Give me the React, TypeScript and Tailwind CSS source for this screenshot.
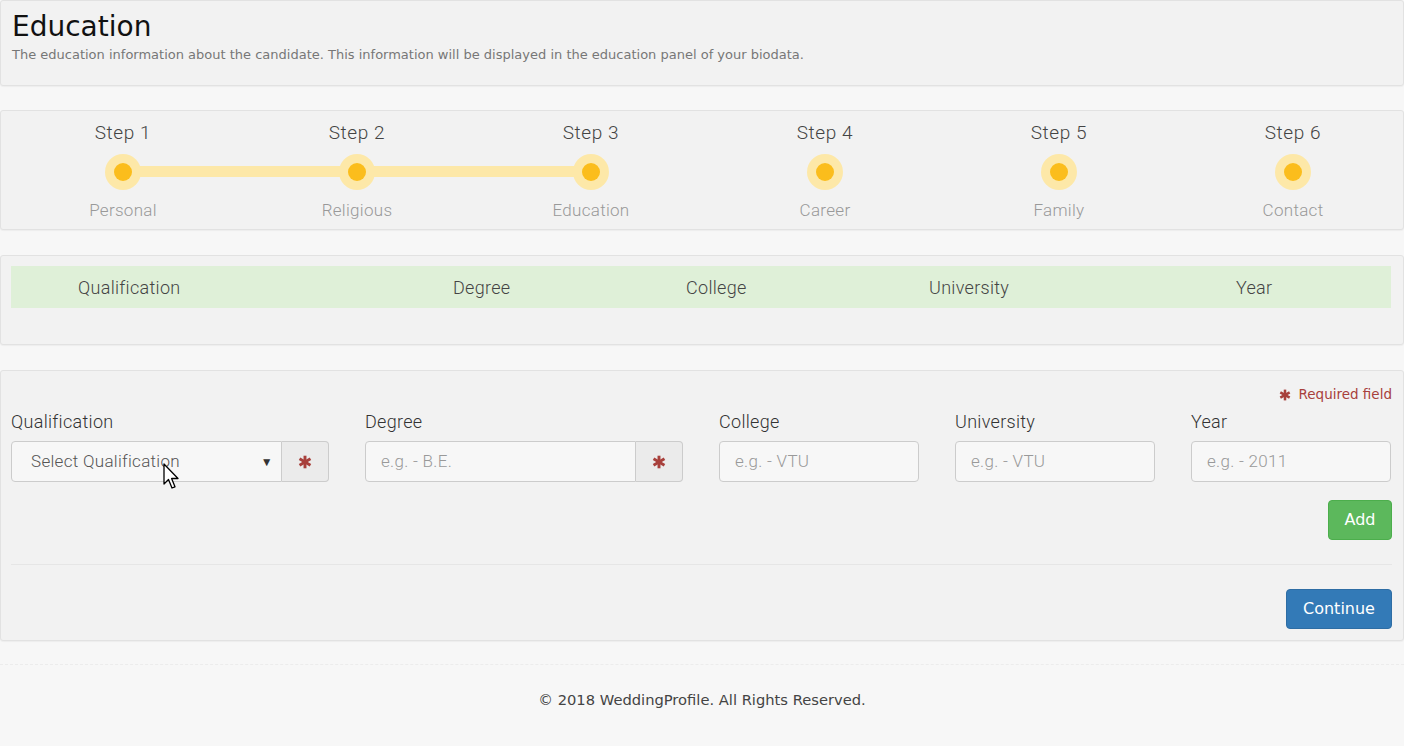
import React from "react";

const work = { fontFamily: '"DejaVu Sans", "Open Sans", sans-serif' };
const cond = { fontFamily: 'Roboto, "Noto Sans", sans-serif', fontWeight: 300 };

function Star({ size = 14 }: { size?: number }) {
  return (
    <svg width={size} height={size} viewBox="0 0 20 20" className="inline-block">
      <g stroke="#a8403c" strokeWidth="4.2" strokeLinecap="butt">
        <line x1="10" y1="1" x2="10" y2="19" />
        <line x1="2.2" y1="5.5" x2="17.8" y2="14.5" />
        <line x1="2.2" y1="14.5" x2="17.8" y2="5.5" />
      </g>
    </svg>
  );
}

const steps = [
  ["Step 1", "Personal"],
  ["Step 2", "Religious"],
  ["Step 3", "Education"],
  ["Step 4", "Career"],
  ["Step 5", "Family"],
  ["Step 6", "Contact"],
];

function Cursor() {
  return (
    <svg width="20" height="28" viewBox="0 0 20 28" className="absolute left-[163px] top-[463px] pointer-events-none">
      <path d="M1 1 L1 21 L5.5 16.5 L9 25 L12 23.8 L8.6 15.5 L15 15.5 Z" fill="#fff" stroke="#000" strokeWidth="1.3" strokeLinejoin="round" />
    </svg>
  );
}

export default function App() {
  return (
    <div className="relative w-[1404px] min-h-[746px] bg-[#f7f7f7] text-[#333]" style={cond}>
      {/* Header panel */}
      <div className="h-[86px] border border-[#e2e2e2] rounded-[3px] bg-[#f2f2f2] px-[11px] pt-[8px] shadow-[0_1px_1px_rgba(0,0,0,0.04)]" style={{ fontWeight: 400 }}>
        <h1 className="text-[28px] leading-[36px] text-[#111]" style={work}>Education</h1>
        <p className="text-[13px] leading-[18px] text-[#777] mt-[1px]" style={work}>
          The education information about the candidate. This information will be displayed in the education panel of your biodata.
        </p>
      </div>

      {/* Steps panel */}
      <div className="mt-[24px] h-[120px] border border-[#e2e2e2] rounded-[3px] bg-[#f2f2f2] overflow-hidden shadow-[0_1px_1px_rgba(0,0,0,0.04)]">
        <div className="relative flex pl-[5px] pt-[9px]">
          <div className="absolute left-[123px] top-[55px] w-[468px] h-[11px] bg-[#fde8a8]" />
          {steps.map(([s, l]) => (
            <div key={s} className="relative w-[234px] shrink-0 flex flex-col items-center">
              <div className="text-[19px] leading-[26px] text-[#444] tracking-[0.6px]">{s}</div>
              <div className="mt-[8px] w-[36px] h-[36px] rounded-full bg-[#fde8a8] flex items-center justify-center">
                <div className="w-[18px] h-[18px] rounded-full bg-[#fbbd1c]" />
              </div>
              <div className="mt-[8px] text-[17px] leading-[24px] text-[#999] tracking-[0.3px]">{l}</div>
            </div>
          ))}
        </div>
      </div>

      {/* Table panel */}
      <div className="mt-[25px] h-[90px] border border-[#e2e2e2] rounded-[3px] bg-[#f2f2f2] pl-[10px] pr-[12px] pt-[10px] shadow-[0_1px_1px_rgba(0,0,0,0.04)]">
        <div className="flex h-[42px] items-center bg-[#dff0d8] text-[18px] text-[#444] tracking-[0.3px]">
          <div className="w-[442px] pl-[67px]">Qualification</div>
          <div className="w-[233px]">Degree</div>
          <div className="w-[243px]">College</div>
          <div className="w-[307px]">University</div>
          <div className="flex-1">Year</div>
        </div>
      </div>

      {/* Form panel */}
      <div className="mt-[25px] h-[271px] border border-[#e2e2e2] rounded-[3px] bg-[#f2f2f2] pl-[10px] pr-[11px] shadow-[0_1px_1px_rgba(0,0,0,0.04)]">
        <div className="flex justify-end items-center gap-[7px] pt-[13px] h-[34px] text-[13.5px] text-[#a8403c]" style={{ ...work, fontWeight: 400 }}>
          <Star size={12} />
          <span>Required field</span>
        </div>
        <div className="flex gap-[36px] mt-[4px]">
          <div className="w-[318px]">
            <div className="text-[18px] leading-[25px] text-[#333] mb-[7px] tracking-[0.3px]">Qualification</div>
            <div className="flex h-[41px]">
              <div className="flex-1 flex items-center justify-between border border-[#ccc] rounded-l-[4px] bg-[#f7f7f7] pl-[19px] pr-[8px] text-[17px] text-[#555] tracking-[0.3px]">
                <span>Select Qualification</span>
                <span className="text-[12px] text-[#333]">▼</span>
              </div>
              <div className="w-[47px] flex items-center justify-center border border-l-0 border-[#ccc] rounded-r-[4px] bg-[#ebebeb]">
                <Star size={14} />
              </div>
            </div>
          </div>
          <div className="w-[318px]">
            <div className="text-[18px] leading-[25px] text-[#333] mb-[7px] tracking-[0.3px]">Degree</div>
            <div className="flex h-[41px]">
              <div className="flex-1 flex items-center border border-[#ccc] rounded-l-[4px] bg-[#f7f7f7] pl-[15px] text-[17px] text-[#999] tracking-[0.3px]">
                e.g. - B.E.
              </div>
              <div className="w-[47px] flex items-center justify-center border border-l-0 border-[#ccc] rounded-r-[4px] bg-[#ebebeb]">
                <Star size={14} />
              </div>
            </div>
          </div>
          {[
            ["College", "e.g. - VTU"],
            ["University", "e.g. - VTU"],
            ["Year", "e.g. - 2011"],
          ].map(([l, p]) => (
            <div key={l} className="w-[200px]">
              <div className="text-[18px] leading-[25px] text-[#333] mb-[7px] tracking-[0.3px]">{l}</div>
              <div className="h-[41px] flex items-center border border-[#ccc] rounded-[4px] bg-[#f7f7f7] pl-[15px] text-[17px] text-[#999] tracking-[0.3px]">
                {p}
              </div>
            </div>
          ))}
        </div>
        <div className="flex justify-end mt-[18px]">
          <button className="h-[40px] w-[64px] rounded-[4px] bg-[#5cb85c] border border-[#4cae4c] text-white text-[16px]" style={{ ...work, fontWeight: 400 }}>Add</button>
        </div>
        <div className="mt-[24px] border-t border-[#e6e6e6]" />
        <div className="flex justify-end mt-[24px]">
          <button className="h-[40px] w-[106px] rounded-[4px] bg-[#337ab7] border border-[#2e6da4] text-white text-[16px]" style={{ ...work, fontWeight: 400 }}>Continue</button>
        </div>
      </div>

      {/* Footer */}
      <div className="mt-[23px] border-t border-dashed border-[#ececec]" />
      <div className="pt-[24px] text-center text-[14.7px] text-[#444]" style={{ ...work, fontWeight: 400 }}>
        © 2018 WeddingProfile. All Rights Reserved.
      </div>

      <Cursor />
    </div>
  );
}
